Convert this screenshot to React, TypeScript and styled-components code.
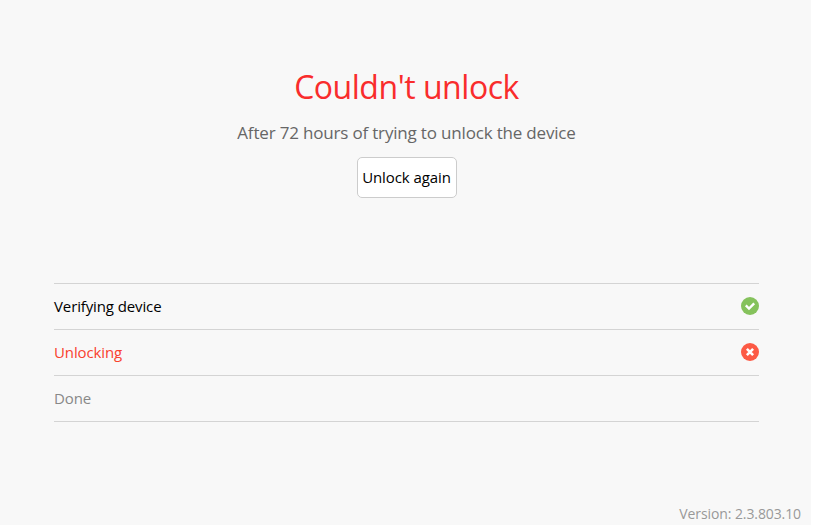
import React from "react";
import styled, { createGlobalStyle } from "styled-components";

const Global = createGlobalStyle`
  html, body { margin: 0; padding: 0; background: #fff; }
  body { font-family: "Open Sans", "Noto Sans", sans-serif; }
`;

const Page = styled.div`
  width: 811px;
  height: 525px;
  background: #f8f8f8;
  display: flex;
  flex-direction: column;
  overflow: hidden;
`;

const Hero = styled.section`
  display: flex;
  flex-direction: column;
  align-items: center;
  padding: 66px 0 0 2px;
  height: 283px;
  box-sizing: border-box;
`;

const Title = styled.h1`
  margin: 0;
  font-size: 32px;
  line-height: 42px;
  font-weight: 400;
  letter-spacing: -0.47px;
  color: #f92c2c;
`;

const Subtitle = styled.p`
  margin: 13px 0 0;
  font-size: 17px;
  line-height: 24px;
  letter-spacing: -0.18px;
  color: #666;
`;

const Button = styled.button`
  margin-top: 12px;
  width: 100px;
  height: 41px;
  padding: 0 0 2px;
  background: #fff;
  border: 1px solid #ccc;
  border-radius: 5px;
  font-family: inherit;
  font-size: 15px;
  letter-spacing: -0.08px;
  color: #000;
`;

const Steps = styled.ul`
  list-style: none;
  margin: 0 52px 0 54px;
  padding: 0;
  border-top: 1px solid #d4d4d4;
`;

const Step = styled.li<{ $color: string }>`
  height: 43px;
  padding-bottom: 2px;
  border-bottom: 1px solid #d4d4d4;
  display: flex;
  align-items: center;
  justify-content: space-between;
  font-size: 15px;
  letter-spacing: -0.12px;
  color: ${(p) => p.$color};
`;

const Footer = styled.footer`
  margin-top: auto;
  padding: 0 10px 1px 0;
  text-align: right;
  font-size: 14px;
  line-height: 20px;
  letter-spacing: -0.1px;
  color: #999;
`;

const StatusIcon = styled.svg`
  width: 18px;
  height: 18px;
  display: block;
`;

const Check = () => (
  <StatusIcon viewBox="0 0 18 18">
    <circle cx="9" cy="9" r="9" fill="#85c25c" />
    <path d="M4.8 8.4 8 11.5 13.2 6.4" fill="none" stroke="#fff" strokeWidth="2.4" />
  </StatusIcon>
);

const Cross = () => (
  <StatusIcon viewBox="0 0 18 18">
    <circle cx="9" cy="9" r="9" fill="#fc5a45" />
    <path d="M5.9 5.9 12.1 12.1M12.1 5.9 5.9 12.1" fill="none" stroke="#fff" strokeWidth="2.6" />
  </StatusIcon>
);

export default function App() {
  return (
    <Page>
      <Global />
      <Hero>
        <Title>Couldn't unlock</Title>
        <Subtitle>After 72 hours of trying to unlock the device</Subtitle>
        <Button>Unlock again</Button>
      </Hero>
      <Steps>
        <Step $color="#000">Verifying device<Check /></Step>
        <Step $color="#f9422e">Unlocking<Cross /></Step>
        <Step $color="#888">Done</Step>
      </Steps>
      <Footer>Version: 2.3.803.10</Footer>
    </Page>
  );
}
